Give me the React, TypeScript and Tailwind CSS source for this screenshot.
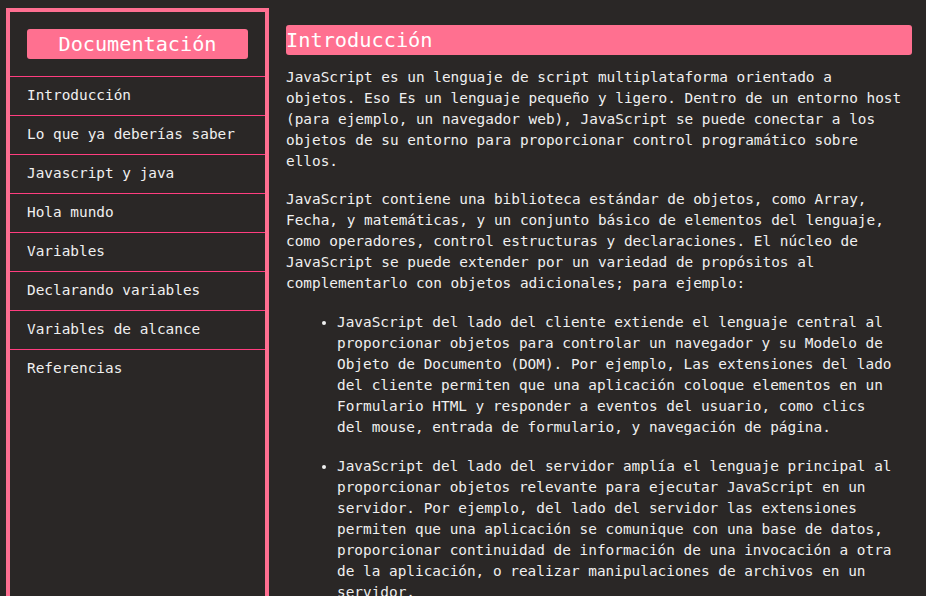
import React from "react";

const navItems = [
  "Introducción",
  "Lo que ya deberías saber",
  "Javascript y java",
  "Hola mundo",
  "Variables",
  "Declarando variables",
  "Variables de alcance",
  "Referencias",
];

export default function App() {
  return (
    <div
      className="relative h-[596px] w-[926px] overflow-hidden bg-[#2a2726] text-[14.4px] leading-[21px] text-[#f0f0f0]"
      style={{ fontFamily: '"DejaVu Sans Mono", "Liberation Mono", monospace' }}
    >
      <nav className="absolute left-[6px] top-[8px] h-[700px] w-[263px] border-4 border-[#ff6f91] bg-[#2a2726]">
        <header className="p-[17px]">
          <div className="flex h-[30px] items-center justify-center rounded-[3px] bg-[#ff7090] text-[20.2px] text-white">
            Documentación
          </div>
        </header>
        <ul>
          {navItems.map((item) => (
            <li
              key={item}
              className="flex h-[39px] items-center border-t border-[#ff3d7f] pb-[2px] pl-[17px]"
            >
              {item}
            </li>
          ))}
        </ul>
      </nav>
      <main className="ml-[286px] w-[626px] pt-[25px]">
        <section>
          <header className="flex h-[30px] items-center rounded-[3px] bg-[#ff7090] text-[20.3px] text-white">
            Introducción
          </header>
          <div className="w-[618px]">
            <p className="mt-[12px]">
              JavaScript es un lenguaje de script multiplataforma orientado a
              objetos. Eso Es un lenguaje pequeño y ligero. Dentro de un entorno
              host (para ejemplo, un navegador web), JavaScript se puede
              conectar a los objetos de su entorno para proporcionar control
              programático sobre ellos.
            </p>
            <p className="mt-[17px]">
              JavaScript contiene una biblioteca estándar de objetos, como
              Array, Fecha, y matemáticas, y un conjunto básico de elementos del
              lenguaje, como operadores, control estructuras y declaraciones. El
              núcleo de JavaScript se puede extender por un variedad de
              propósitos al complementarlo con objetos adicionales; para
              ejemplo:
            </p>
            <ul className="list-disc pl-[51px] pr-[8px]">
              <li className="mt-[18px]">
                JavaScript del lado del cliente extiende el lenguaje central al
                proporcionar objetos para controlar un navegador y su Modelo de
                Objeto de Documento (DOM). Por ejemplo, Las extensiones del lado
                del cliente permiten que una aplicación coloque elementos en un
                Formulario HTML y responder a eventos del usuario, como clics
                del mouse, entrada de formulario, y navegación de página.
              </li>
              <li className="mt-[18px]">
                JavaScript del lado del servidor amplía el lenguaje principal al
                proporcionar objetos relevante para ejecutar JavaScript en un
                servidor. Por ejemplo, del lado del servidor las extensiones
                permiten que una aplicación se comunique con una base de datos,
                proporcionar continuidad de información de una invocación a otra
                de la aplicación, o realizar manipulaciones de archivos en un
                servidor.
              </li>
            </ul>
          </div>
        </section>
      </main>
    </div>
  );
}
